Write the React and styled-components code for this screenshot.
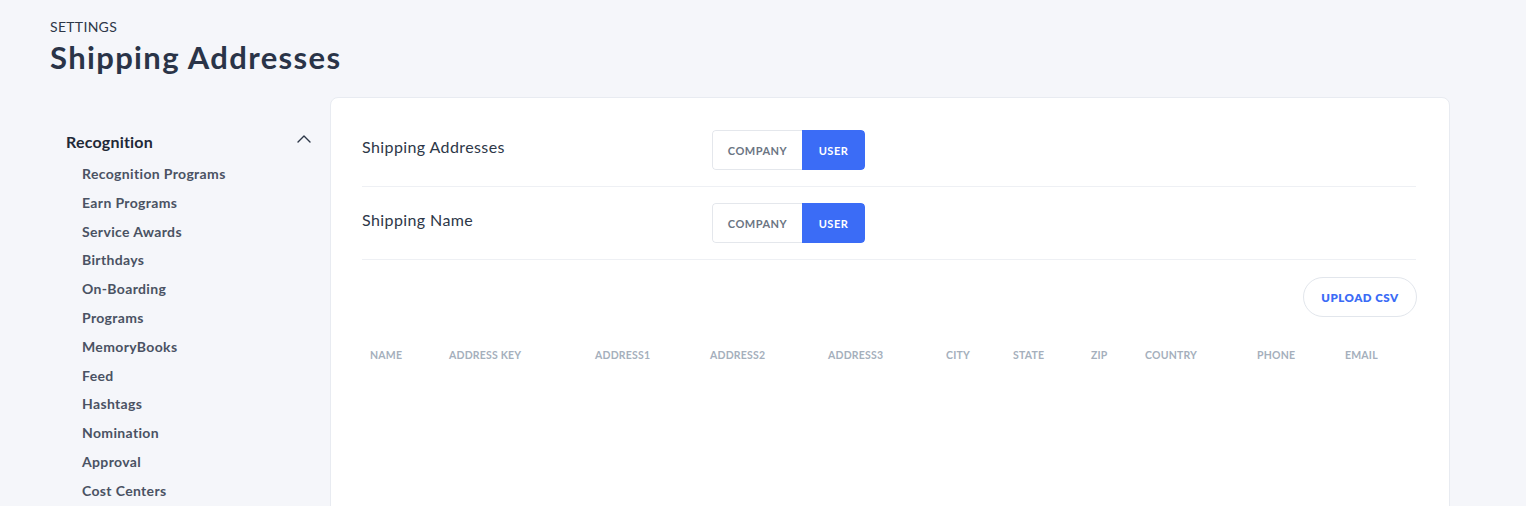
import React from "react";
import styled, { createGlobalStyle } from "styled-components";

const Global = createGlobalStyle`
  html, body { margin: 0; padding: 0; background: #f5f6fa; }
  body { font-family: Lato, "Open Sans", sans-serif; color: #2d3748; }
  * { box-sizing: border-box; }
`;

const Page = styled.div`
  padding: 18px 50px 0 50px;
  height: 506px;
  overflow: hidden;
`;

const Eyebrow = styled.div`
  font-size: 14px;
  letter-spacing: 0.3px;
  color: #2d3748;
  line-height: 18px;
  text-transform: uppercase;
`;

const Title = styled.h1`
  margin: 2px 0 0 0;
  font-size: 31px;
  font-weight: 700;
  letter-spacing: 1.35px;
  line-height: 38px;
  color: #2a3448;
`;

const Body = styled.div`
  display: flex;
  gap: 16px;
  margin-top: 21px;
`;

const Sidebar = styled.nav`
  width: 264px;
  flex: none;
  padding: 33px 0 0 16px;
`;

const GroupHeader = styled.div`
  display: flex;
  align-items: center;
  justify-content: space-between;
  font-size: 16px;
  font-weight: 700;
  letter-spacing: 0.2px;
  color: #1f2937;
  height: 22px;
  margin-bottom: 13px;
`;

const NavItem = styled.div`
  padding-left: 16px;
  font-size: 14px;
  font-weight: 700;
  letter-spacing: 0.35px;
  color: #4a5263;
  line-height: 18px;
  margin-bottom: 10.8px;
`;

const Card = styled.section`
  flex: 1;
  max-width: 1120px;
  background: #fff;
  border: 1px solid #e8ebf1;
  border-radius: 8px;
  padding: 16px 33px 0 31px;
  min-height: 420px;
`;

const SettingRow = styled.div`
  display: flex;
  align-items: center;
  height: 73px;
  border-bottom: 1px solid #eef0f4;
`;

const RowLabel = styled.div`
  width: 350px;
  font-size: 16px;
  letter-spacing: 0.4px;
  color: #2d3748;
  margin-top: -7px;
`;

const Toggle = styled.div`
  display: flex;
  height: 40px;
  border-radius: 4px;
  overflow: hidden;
`;

const ToggleBtn = styled.button`
  font-family: inherit;
  height: 40px;
  width: ${p => p.$w}px;
  border: ${p => (p.$active ? "none" : "1px solid #e4e7ec")};
  border-right: none;
  border-radius: ${p => (p.$active ? "0 4px 4px 0" : "4px 0 0 4px")};
  background: ${p => (p.$active ? "#3b6cf6" : "#fff")};
  color: ${p => (p.$active ? "#fff" : "#6b7583")};
  font-size: 11px;
  font-weight: 700;
  letter-spacing: 0.5px;
  padding: 0;
`;

const ActionBar = styled.div`
  display: flex;
  justify-content: flex-end;
  padding-top: 17px;
`;

const UploadBtn = styled.button`
  font-family: inherit;
  height: 40px;
  width: 114px;
  margin-right: -1px;
  border-radius: 20px;
  border: 1px solid #e2e6ec;
  background: #fff;
  color: #3b6cf6;
  font-size: 11.5px;
  font-weight: 800;
  letter-spacing: 0.5px;
  padding: 0;
`;

const Table = styled.table`
  width: 100%;
  border-collapse: collapse;
  table-layout: fixed;
  margin-top: 27px;
`;

const Th = styled.th`
  text-align: left;
  padding: 0 0 0 8px;
  font-size: 10.5px;
  font-weight: 700;
  color: #a5afbc;
  text-transform: uppercase;
  letter-spacing: 0.2px;
  height: 22px;
`;

const Chevron = () => (
  <svg width="16" height="16" viewBox="0 0 16 16" fill="none" style={{ marginRight: 2, marginTop: -4 }}>
    <path d="M2 11 L8 5 L14 11" stroke="#2d3748" strokeWidth="1.4" strokeLinecap="round" strokeLinejoin="round" />
  </svg>
);

const navItems = [
  "Recognition Programs",
  "Earn Programs",
  "Service Awards",
  "Birthdays",
  "On-Boarding",
  "Programs",
  "MemoryBooks",
  "Feed",
  "Hashtags",
  "Nomination",
  "Approval",
  "Cost Centers",
];

const columns = [
  ["Name", 79],
  ["Address Key", 146],
  ["Address1", 115],
  ["Address2", 118],
  ["Address3", 118],
  ["City", 67],
  ["State", 78],
  ["Zip", 54],
  ["Country", 112],
  ["Phone", 88],
  ["Email", 79],
];

const Setting = ({ label }) => (
  <SettingRow>
    <RowLabel>{label}</RowLabel>
    <Toggle>
      <ToggleBtn $w={90}>COMPANY</ToggleBtn>
      <ToggleBtn $w={63} $active>USER</ToggleBtn>
    </Toggle>
  </SettingRow>
);

export default function App() {
  return (
    <Page>
      <Global />
      <Eyebrow>Settings</Eyebrow>
      <Title>Shipping Addresses</Title>
      <Body>
        <Sidebar>
          <GroupHeader>
            <span>Recognition</span>
            <Chevron />
          </GroupHeader>
          {navItems.map(n => (
            <NavItem key={n}>{n}</NavItem>
          ))}
        </Sidebar>
        <Card>
          <Setting label="Shipping Addresses" />
          <Setting label="Shipping Name" />
          <ActionBar>
            <UploadBtn>UPLOAD CSV</UploadBtn>
          </ActionBar>
          <Table>
            <colgroup>
              {columns.map(([n, w]) => (
                <col key={n} style={{ width: w }} />
              ))}
            </colgroup>
            <thead>
              <tr>
                {columns.map(([n]) => (
                  <Th key={n}>{n}</Th>
                ))}
              </tr>
            </thead>
          </Table>
        </Card>
      </Body>
    </Page>
  );
}
